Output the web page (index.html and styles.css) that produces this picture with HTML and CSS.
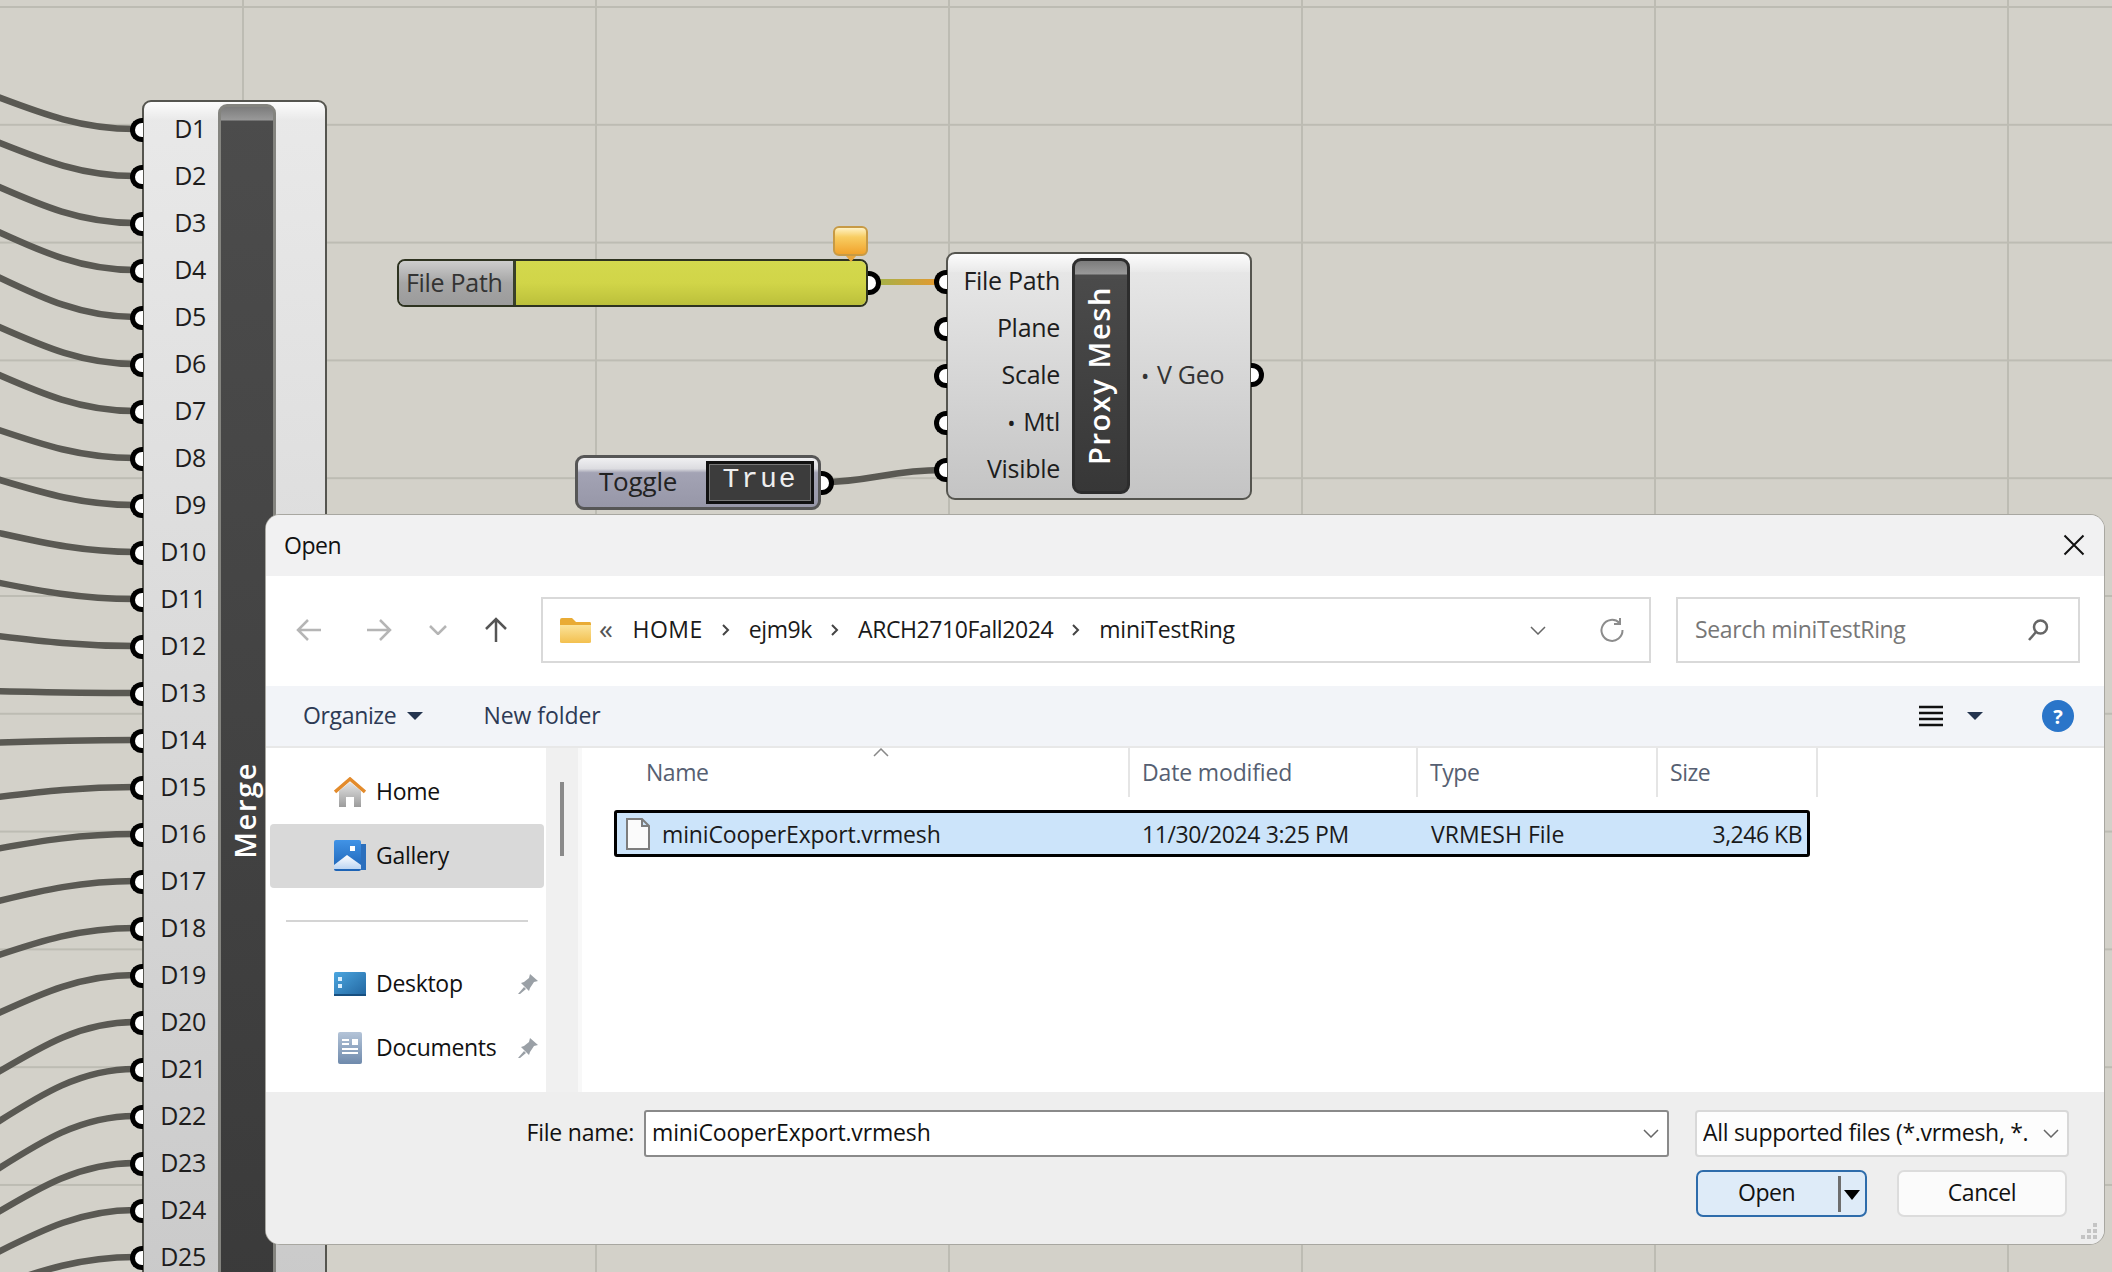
FILE: index.html
```html
<!DOCTYPE html>
<html lang="en">
<head>
<meta charset="utf-8">
<title>Open</title>
<link rel="stylesheet" href="styles.css">
</head>
<body>
<main class="canvas">
  <svg class="wires" width="2112" height="1272" viewBox="0 0 2112 1272">
    <defs>
      <linearGradient id="wireA" x1="0" x2="1" y1="0" y2="0"><stop offset="0" stop-color="#a3b24a"/><stop offset="1" stop-color="#e8982e"/></linearGradient>
    </defs>
    <g class="wire-set">
      <path d="M-10,94 C40,113 80,129 135,129"/>
      <path d="M-10,139 C40,159 80,176 135,176"/>
      <path d="M-10,183 C40,205 80,223 135,223"/>
      <path d="M-10,228 C40,251 80,270 135,270"/>
      <path d="M-10,273 C40,297 80,317 135,317"/>
      <path d="M-10,323 C40,345 80,364 135,364"/>
      <path d="M-10,371 C40,393 80,411 135,411"/>
      <path d="M-10,427 C40,444 80,458 135,458"/>
      <path d="M-10,477 C40,492 80,505 135,505"/>
      <path d="M-10,531 C40,542 80,552 135,552"/>
      <path d="M-10,581 C40,591 80,599 135,599"/>
      <path d="M-10,635 C40,641 80,646 135,646"/>
      <path d="M-10,691 C40,692 80,693 135,693"/>
      <path d="M-10,743 C40,741 80,740 135,740"/>
      <path d="M-10,798 C40,792 80,787 135,787"/>
      <path d="M-10,850 C40,841 80,834 135,834"/>
      <path d="M-10,903 C40,891 80,881 135,881"/>
      <path d="M-10,958 C40,941 80,928 135,928"/>
      <path d="M-10,1017 C40,994 80,975 135,975"/>
      <path d="M-10,1077 C40,1047 80,1022 135,1022"/>
      <path d="M-10,1127 C40,1095 80,1069 135,1069"/>
      <path d="M-10,1174 C40,1142 80,1116 135,1116"/>
      <path d="M-10,1217 C40,1187 80,1163 135,1163"/>
      <path d="M-10,1256 C40,1231 80,1210 135,1210"/>
      <path d="M-10,1288 C40,1271 80,1257 135,1257"/>
      <path d="M822,482 C870,482 890,470 942,470"/>
    </g>
    <rect class="wire-color" x="876" y="279" width="66" height="6" fill="url(#wireA)"/>
  </svg>

  <section class="node node-merge">
    <div class="node-inputs">
      <div class="row"><span class="port port-in"></span>D1</div>
      <div class="row"><span class="port port-in"></span>D2</div>
      <div class="row"><span class="port port-in"></span>D3</div>
      <div class="row"><span class="port port-in"></span>D4</div>
      <div class="row"><span class="port port-in"></span>D5</div>
      <div class="row"><span class="port port-in"></span>D6</div>
      <div class="row"><span class="port port-in"></span>D7</div>
      <div class="row"><span class="port port-in"></span>D8</div>
      <div class="row"><span class="port port-in"></span>D9</div>
      <div class="row"><span class="port port-in"></span>D10</div>
      <div class="row"><span class="port port-in"></span>D11</div>
      <div class="row"><span class="port port-in"></span>D12</div>
      <div class="row"><span class="port port-in"></span>D13</div>
      <div class="row"><span class="port port-in"></span>D14</div>
      <div class="row"><span class="port port-in"></span>D15</div>
      <div class="row"><span class="port port-in"></span>D16</div>
      <div class="row"><span class="port port-in"></span>D17</div>
      <div class="row"><span class="port port-in"></span>D18</div>
      <div class="row"><span class="port port-in"></span>D19</div>
      <div class="row"><span class="port port-in"></span>D20</div>
      <div class="row"><span class="port port-in"></span>D21</div>
      <div class="row"><span class="port port-in"></span>D22</div>
      <div class="row"><span class="port port-in"></span>D23</div>
      <div class="row"><span class="port port-in"></span>D24</div>
      <div class="row"><span class="port port-in"></span>D25</div>
    </div>
    <div class="strip"><span class="strip-label">Merge</span></div>
  </section>

  <section class="param">
    <div class="param-label">File Path</div>
    <div class="param-value"></div>
    <span class="port port-out"></span>
  </section>
  <div class="bubble"></div>

  <section class="node node-proxy">
    <div class="node-inputs">
      <div class="row"><span class="port port-in"></span>File Path</div>
      <div class="row"><span class="port port-in"></span>Plane</div>
      <div class="row"><span class="port port-in"></span>Scale</div>
      <div class="row"><span class="port port-in"></span><span class="dot">•</span>Mtl</div>
      <div class="row"><span class="port port-in"></span>Visible</div>
    </div>
    <div class="strip"><span class="strip-label">Proxy Mesh</span></div>
    <div class="node-output">
      <div class="row row-out"><span class="dot">•</span>V Geo<span class="port port-out"></span></div>
    </div>
  </section>

  <section class="toggle">
    <div class="toggle-label">Toggle</div>
    <div class="toggle-btn">True</div>
    <span class="port port-out"></span>
  </section>

  <section class="dialog">
    <header class="titlebar">
      <span>Open</span>
      <svg class="close" width="22" height="22" viewBox="0 0 22 22"><path d="M1.5 1.5 L20.5 20.5 M20.5 1.5 L1.5 20.5"/></svg>
    </header>

    <div class="toolbar">
      <div class="nav-btns">
        <svg class="i-back" width="26" height="24" viewBox="0 0 26 24"><path d="M25 12 H2 M12 2 L2 12 L12 22"/></svg>
        <svg class="i-back" width="26" height="24" viewBox="0 0 26 24"><path d="M1 12 H24 M14 2 L24 12 L14 22"/></svg>
        <svg class="i-back i-small" width="18" height="10" viewBox="0 0 18 10"><path d="M1 1 L9 9 L17 1"/></svg>
        <svg class="i-up" width="24" height="26" viewBox="0 0 24 26"><path d="M12 25 V2 M2 12 L12 2 L22 12"/></svg>
      </div>
      <div class="address">
        <svg width="33" height="27" viewBox="0 0 33 27">
          <defs><linearGradient id="fold" x1="0" x2="0" y1="0" y2="1"><stop offset="0" stop-color="#fbe39a"/><stop offset="1" stop-color="#f3c04f"/></linearGradient></defs>
          <path d="M1 3 Q1 1 3 1 H13 L17 5 H31 Q32 5 32 7 V10 H1 Z" fill="#e9ab35"/>
          <path d="M1 8 H32 V25 Q32 26 30 26 H3 Q1 26 1 25 Z" fill="url(#fold)"/>
        </svg>
        <span class="crumb-mark">«</span>
        <span class="crumb crumb-home">HOME</span>
        <svg class="sep" width="10" height="14" viewBox="0 0 10 14"><path d="M2 2 L7 7 L2 12"/></svg>
        <span class="crumb">ejm9k</span>
        <svg class="sep" width="10" height="14" viewBox="0 0 10 14"><path d="M2 2 L7 7 L2 12"/></svg>
        <span class="crumb">ARCH2710Fall2024</span>
        <svg class="sep" width="10" height="14" viewBox="0 0 10 14"><path d="M2 2 L7 7 L2 12"/></svg>
        <span class="crumb crumb-last">miniTestRing</span>
        <svg class="addr-chev" width="16" height="9" viewBox="0 0 16 9"><path d="M1 1 L8 8 L15 1"/></svg>
        <svg class="addr-refresh" width="26" height="26" viewBox="0 0 26 26"><path d="M20.5 6 A10.5 10.5 0 1 0 23.5 13 M21 1 V7 H15"/></svg>
      </div>
      <div class="search">
        <span class="lift">Search miniTestRing</span>
        <svg width="24" height="24" viewBox="0 0 24 24"><circle cx="14.5" cy="9" r="6.5"/><path d="M10 14 L3 22"/></svg>
      </div>
    </div>

    <div class="commands">
      <span class="cmd lift">Organize</span>
      <span class="caret"></span>
      <span class="cmd cmd-new lift">New folder</span>
      <svg class="views" width="26" height="22" viewBox="0 0 26 22"><path d="M1 2 H25 M1 8 H25 M1 14 H25 M1 20 H25"/></svg>
      <span class="caret caret-views"></span>
      <span class="help">?</span>
    </div>

    <div class="main-area">
      <nav class="sidebar">
        <div class="side-row">
          <svg width="32" height="30" viewBox="0 0 32 30">
            <defs><linearGradient id="hb" x1="0" x2="0" y1="0" y2="1"><stop offset="0" stop-color="#e4e4e4"/><stop offset="1" stop-color="#9c9c9c"/></linearGradient></defs>
            <path d="M5 14 L16 5 L27 14 V30 H20 V20 H12 V30 H5 Z" fill="url(#hb)"/>
            <path d="M1 15 L16 2 L31 15" fill="none" stroke="#e38b2c" stroke-width="3.5"/>
          </svg>
          <span class="lift">Home</span>
        </div>
        <div class="side-row side-active">
          <svg width="32" height="32" viewBox="0 0 32 32">
            <defs><linearGradient id="gb" x1="0" x2="0" y1="0" y2="1"><stop offset="0" stop-color="#4193e6"/><stop offset="1" stop-color="#1c62b4"/></linearGradient><linearGradient id="gm" x1="0" x2="0" y1="0" y2="1"><stop offset="0" stop-color="#ffffff"/><stop offset="1" stop-color="#bcd5f2"/></linearGradient></defs>
            <rect x="27" y="4" width="5" height="26" fill="#2b6fbd"/>
            <rect x="0" y="0" width="27" height="31" rx="2" fill="url(#gb)"/>
            <rect x="16" y="6" width="5" height="5" fill="#fff"/>
            <path d="M0 25 L13 15 L27 25 V29 H0 Z" fill="url(#gm)"/>
          </svg>
          <span class="lift">Gallery</span>
        </div>
        <div class="side-sep"></div>
        <div class="side-row">
          <svg width="32" height="24" viewBox="0 0 32 24">
            <defs><linearGradient id="db" x1="0" x2="1" y1="0" y2="1"><stop offset="0" stop-color="#4ba6e0"/><stop offset="1" stop-color="#22659f"/></linearGradient></defs>
            <rect width="32" height="24" rx="1.5" fill="url(#db)"/>
            <rect y="22" width="32" height="2" fill="#174f80"/>
            <rect x="4" y="5" width="4" height="4" fill="#d9efff"/><rect x="4" y="12" width="4" height="4" fill="#d9efff"/>
          </svg>
          <span class="lift">Desktop</span>
          <svg class="pin" width="22" height="22" viewBox="0 0 22 22"><path d="M13 1 L21 8 L17 9 L13 15 L12 18 L4 10 L7 9 L12 5 Z M7 14 L1 21 L3 21 L9 16 Z"/></svg>
        </div>
        <div class="side-row">
          <svg class="doc" width="24" height="32" viewBox="0 0 24 32">
            <defs><linearGradient id="dc" x1="0" x2="0" y1="0" y2="1"><stop offset="0" stop-color="#b4c4d8"/><stop offset="1" stop-color="#6f8aac"/></linearGradient></defs>
            <rect width="24" height="32" rx="2" fill="url(#dc)"/>
            <path d="M4 8 H11 M4 12 H11 M4 17 H20 M4 21 H20" stroke="#fff" stroke-width="2"/>
            <rect x="14" y="7" width="6" height="6" fill="#fff"/>
          </svg>
          <span class="lift">Documents</span>
          <svg class="pin" width="22" height="22" viewBox="0 0 22 22"><path d="M13 1 L21 8 L17 9 L13 15 L12 18 L4 10 L7 9 L12 5 Z M7 14 L1 21 L3 21 L9 16 Z"/></svg>
        </div>
      </nav>
      <div class="side-scroll"><div class="side-thumb"></div></div>
      <div class="files">
        <svg class="sort" width="16" height="9" viewBox="0 0 16 9"><path d="M1 8 L8 1 L15 8"/></svg>
        <div class="file-head">
          <div class="col col-name">Name</div>
          <div class="col col-date">Date modified</div>
          <div class="col col-type">Type</div>
          <div class="col col-size">Size</div>
        </div>
        <div class="file-row">
          <div class="cell cell-name">
            <svg width="24" height="32" viewBox="0 0 24 32"><path d="M1 1 H16 L23 8 V31 H1 Z M16 1 V8 H23" fill="#fbfbfb" stroke="#7d7d7d" stroke-width="2"/></svg>
            <span>miniCooperExport.vrmesh</span>
          </div>
          <div class="cell cell-date">11/30/2024 3:25 PM</div>
          <div class="cell cell-type">VRMESH File</div>
          <div class="cell cell-size">3,246 KB</div>
        </div>
      </div>
    </div>

    <footer class="bottom">
      <div class="bottom-line">
        <span class="fn-label lift">File name:</span>
        <div class="fn-input">
          <span class="lift">miniCooperExport.vrmesh</span>
          <svg width="16" height="9" viewBox="0 0 16 9"><path d="M1 1 L8 8 L15 1"/></svg>
        </div>
        <div class="filter">
          <span class="filter-text lift">All supported files (*.vrmesh, *.</span>
          <svg width="16" height="9" viewBox="0 0 16 9"><path d="M1 1 L8 8 L15 1"/></svg>
        </div>
      </div>
      <div class="bottom-line bottom-actions">
        <div class="btn btn-open"><span class="btn-open-text lift">Open</span><span class="btn-split"></span><span class="btn-caret"></span></div>
        <div class="btn"><span class="lift">Cancel</span></div>
      </div>
      <svg class="grip" width="18" height="18" viewBox="0 0 18 18"><path d="M13 1 h4 v4 h-4z M7 7 h4 v4 h-4z M13 7 h4 v4 h-4z M1 13 h4 v4 h-4z M7 13 h4 v4 h-4z M13 13 h4 v4 h-4z"/></svg>
    </footer>
  </section>
</main>
</body>
</html>
```
FILE: styles.css
```css
* { box-sizing: border-box; }
html, body { margin: 0; padding: 0; }
body { font-family: "Open Sans", "Noto Sans", sans-serif; }

.canvas {
  position: relative;
  width: 2112px;
  height: 1272px;
  overflow: hidden;
  background-color: #d3d1c9;
  background-image:
    linear-gradient(#bdbcb3 2px, transparent 2px),
    linear-gradient(90deg, #bdbcb3 2px, transparent 2px);
  background-size: 353px 117.8px;
  background-position: 242px 6px;
}

.wires { position: absolute; left: 0; top: 0; }
.wire-set path { fill: none; stroke: #5a5953; stroke-width: 6.5; }

/* Grasshopper nodes */
.node {
  position: absolute;
  display: flex;
  border: 2px solid #55554f;
  border-radius: 9px;
  background:
    linear-gradient(#fcfcfc, #e9e9e9) 0 0 / 100% 18px no-repeat,
    linear-gradient(#e9e9e9, #c4c4c4);
  color: #1d1d1d;
  font-family: "Open Sans", sans-serif;
  font-size: 25px;
  letter-spacing: -0.3px;
}
.node-merge { left: 142px; top: 100px; width: 185px; height: 1420px; }
.node-proxy { left: 946px; top: 252px; width: 306px; height: 248px; }
.node-inputs { padding-top: 4px; text-align: right; white-space: nowrap; }
.node-merge .node-inputs { width: 74px; padding-right: 12px; }
.node-proxy .node-inputs { width: 124px; padding-right: 12px; }
.row { position: relative; height: 47px; line-height: 45px; }
.dot { margin-right: 8px; font-size: 22px; }
.strip {
  display: flex;
  flex: none;
  align-items: center;
  justify-content: center;
  width: 58px;
  margin-top: 2px;
  margin-bottom: 2px;
  padding-right: 5px;
  border: 3px solid #84847f;
  border-radius: 9px;
  background:
    linear-gradient(#7c7c7c, #999 13px, #4c4c4c 14px) 0 0 / 100% 18px no-repeat,
    linear-gradient(#4c4c4c, #373737);
}
.node-proxy .strip { border-color: #2d2d2d; margin-top: 4px; margin-bottom: 4px; }
.strip-label {
  writing-mode: vertical-rl;
  transform: rotate(180deg);
  color: #fff;
  font-size: 29px;
  font-weight: 600;
  letter-spacing: 1.6px;
  white-space: nowrap;
}
.node-output { flex: 1; padding-top: 98px; padding-left: 11px; }
.row-out { position: static; color: #333; white-space: nowrap; }

.port {
  position: absolute;
  top: 12px;
  width: 13px;
  height: 24px;
  background: #fff;
  border: 5px solid #000;
}
.port-in {
  left: -14px;
  border-right: 0;
  border-radius: 12px 0 0 12px;
}
.port-out {
  right: -14px;
  border-left: 0;
  border-radius: 0 12px 12px 0;
}
.row-out .port-out { top: 109px; right: -14px; }

.param {
  position: absolute;
  left: 397px;
  top: 259px;
  width: 471px;
  height: 48px;
  display: flex;
  border: 2px solid #2e3320;
  border-radius: 8px;
  background: #ccc;
}
.param-label {
  width: 117px;
  padding-left: 7px;
  border-right: 3px solid #39402a;
  border-radius: 6px 0 0 6px;
  background: linear-gradient(#cdcdcd, #a5a5a5 50%, #9b9b9b);
  color: #333;
  font-size: 25px;
  line-height: 42px;
  letter-spacing: -0.3px;
  white-space: nowrap;
}
.param-value {
  flex: 1;
  border-radius: 0 6px 6px 0;
  background: linear-gradient(#d3d84d, #d1d548 50%, #bcc03b);
}
.param .port-out { top: 10px; right: -15px; }

.bubble {
  position: absolute;
  left: 833px;
  top: 226px;
  width: 35px;
  height: 30px;
  border: 2px solid #c79a45;
  border-radius: 6px;
  background: linear-gradient(#fff2c4, #f8cd62 35%, #f1a32c);
}
.bubble::after {
  content: "";
  position: absolute;
  left: 11px;
  bottom: -8px;
  border-left: 5px solid transparent;
  border-right: 5px solid transparent;
  border-top: 6px solid #e8a63c;
}

.toggle {
  position: absolute;
  left: 575px;
  top: 455px;
  width: 246px;
  height: 55px;
  display: flex;
  align-items: center;
  justify-content: space-between;
  padding: 0 4px 0 21px;
  border: 3px solid #565656;
  border-radius: 9px;
  background: linear-gradient(#f0f0f2, #dcdce0 22%, #a3a3b4 30%, #9797a8);
}
.toggle-label { font-size: 26px; letter-spacing: -0.2px; color: #222; padding-bottom: 3px; }
.toggle-btn {
  width: 108px;
  height: 43px;
  border: 3px solid #111;
  outline: 1px solid #777;
  outline-offset: -4px;
  background: #3c3c3c;
  color: #eee;
  font-family: "Liberation Mono", monospace;
  font-size: 28px;
  letter-spacing: 2px;
  line-height: 32px;
  text-align: center;
}
.toggle .port-out { top: 13px; right: -16px; }

/* Open dialog */
.dialog {
  position: absolute;
  left: 266px;
  top: 515px;
  width: 1838px;
  height: 729px;
  display: flex;
  flex-direction: column;
  overflow: hidden;
  border-radius: 14px;
  box-shadow: 0 0 0 1px #a8a7a1;
  background: #eee;
  color: #111;
  font-family: "Open Sans", sans-serif;
  font-size: 23px;
  letter-spacing: -0.45px;
}
.lift { padding-bottom: 3px; }
.titlebar {
  display: flex;
  flex: none;
  align-items: center;
  justify-content: space-between;
  height: 61px;
  padding: 0 19px 2px 18px;
  background: #f1f1f2;
}
.close path { fill: none; stroke: #111; stroke-width: 2; }

.toolbar {
  display: flex;
  flex: none;
  align-items: flex-start;
  height: 110px;
  padding-top: 21px;
  background: #fff;
}
.nav-btns {
  display: flex;
  align-items: center;
  width: 275px;
  height: 66px;
  padding-left: 30px;
}
.nav-btns svg { flex: none; fill: none; }
.i-back { stroke: #b5b5b5; stroke-width: 2.5; margin-right: 44px; }
.i-small { margin-left: -7px; margin-right: 37px; }
.i-up { stroke: #555; stroke-width: 2.5; }
.address {
  display: flex;
  align-items: center;
  width: 1110px;
  height: 66px;
  margin-right: 25px;
  padding-left: 16px;
  border: 2px solid #d9d9d9;
  white-space: nowrap;
}
.crumb-mark { margin-left: 7px; margin-right: 20px; padding-bottom: 4px; color: #555; font-size: 28px; }
.crumb { padding-bottom: 3px; color: #1a1a1a; letter-spacing: -0.4px; }
.crumb-home { letter-spacing: 0.5px; }
.crumb-last { letter-spacing: -0.23px; }
.sep { margin: 0 18px; fill: none; stroke: #444; stroke-width: 2; }
.addr-chev { margin-left: auto; margin-right: 53px; fill: none; stroke: #666; stroke-width: 1.5; }
.addr-refresh { margin-right: 24px; fill: none; stroke: #8c8c8c; stroke-width: 2; }
.search {
  display: flex;
  align-items: center;
  justify-content: space-between;
  width: 404px;
  height: 66px;
  padding: 0 28px 0 17px;
  border: 2px solid #d9d9d9;
  color: #777;
  letter-spacing: -0.35px;
}
.search svg { fill: none; stroke: #666; stroke-width: 2.5; }

.commands {
  position: relative;
  display: flex;
  flex: none;
  align-items: center;
  height: 60px;
  padding: 0 30px 0 37px;
  background: #f2f4f8;
  color: #2d3a55;
  letter-spacing: -0.35px;
}
.caret {
  width: 0;
  height: 0;
  margin-left: 11px;
  border-left: 8px solid transparent;
  border-right: 8px solid transparent;
  border-top: 8px solid #24344f;
}
.cmd-new { margin-left: 60px; letter-spacing: -0.05px; }
.views { margin-left: auto; fill: none; stroke: #111; stroke-width: 2.5; }
.caret-views { margin-left: 23px; }
.help {
  display: flex;
  align-items: center;
  justify-content: center;
  width: 32px;
  height: 32px;
  margin-left: 59px;
  border-radius: 50%;
  background: #2a75c9;
  color: #fff;
  font-size: 20px;
  font-weight: 700;
  letter-spacing: 0;
}

.main-area {
  display: flex;
  flex: none;
  height: 346px;
  border-top: 2px solid #e8e8e8;
}
.sidebar {
  flex: none;
  width: 280px;
  padding-top: 12px;
  overflow: hidden;
  background: #fff;
  letter-spacing: -0.3px;
}
.side-row {
  display: flex;
  align-items: center;
  height: 64px;
  margin: 0 2px 0 4px;
  padding: 0 5px 0 64px;
  border-radius: 4px;
}
.side-row > span { margin-left: 10px; }
.side-active { background: #d9d9d9; }
.side-row svg { flex: none; }
.doc { margin-left: 4px; margin-right: 4px; }
.pin { margin-left: auto; fill: #9aa0a6; }
.side-sep { position: relative; height: 64px; }
.side-sep::after {
  content: "";
  position: absolute;
  left: 20px;
  right: 18px;
  top: 32px;
  height: 2px;
  background: #d4d4d4;
}
.side-scroll {
  flex: none;
  width: 32px;
  padding: 34px 0 0 14px;
  background: #f0f0f0;
}
.side-thumb { width: 4px; height: 74px; background: #8a8a8a; }
.files {
  position: relative;
  flex: 1;
  border-left: 4px solid #f8f8f8;
  background: #fff;
}
.sort {
  position: absolute;
  left: 291px;
  top: 0;
  fill: none;
  stroke: #888;
  stroke-width: 1.5;
}
.file-head {
  display: flex;
  height: 49px;
  color: #565f72;
  line-height: 48px;
}
.col { border-right: 2px solid #e5e5e5; }
.col-name { width: 548px; padding-left: 64px; }
.col-date { width: 288px; padding-left: 12px; letter-spacing: -0.15px; }
.col-type { width: 240px; padding-left: 12px; }
.col-size { width: 160px; padding-left: 12px; }
.file-row {
  display: flex;
  align-items: center;
  width: 1196px;
  height: 47px;
  margin-top: 13px;
  margin-left: 32px;
  border: 3px solid #000;
  border-radius: 3px;
  background: #cce4fa;
  color: #1a1a1a;
}
.cell-name { display: flex; align-items: center; width: 513px; padding-left: 9px; letter-spacing: -0.15px; }
.cell-name span { margin-left: 12px; }
.cell-date { width: 288px; padding-left: 12px; letter-spacing: -0.4px; }
.cell-type { width: 240px; padding-left: 13px; letter-spacing: 0; }
.cell-size { flex: 1; padding-right: 5px; text-align: right; letter-spacing: -0.5px; }

.bottom {
  position: relative;
  flex: 1;
  padding-top: 18px;
  background: #eee;
}
.bottom-line { display: flex; align-items: center; }
.fn-label { width: 378px; padding-right: 10px; text-align: right; letter-spacing: -0.2px; }
.fn-input, .filter {
  display: flex;
  align-items: center;
  justify-content: space-between;
  height: 47px;
  padding: 0 8px 0 6px;
  background: #fff;
  white-space: nowrap;
}
.fn-input { width: 1025px; margin-right: 26px; border: 2px solid #8a8a8a; border-radius: 3px; letter-spacing: -0.15px; }
.filter { width: 374px; overflow: hidden; border: 2px solid #d8d8d8; border-radius: 4px; background: #fdfdfd; letter-spacing: -0.3px; }
.filter-text { flex: 1; overflow: hidden; }
.fn-input svg, .filter svg { flex: none; fill: none; stroke: #666; stroke-width: 1.5; }
.bottom-actions { justify-content: flex-end; gap: 30px; margin-top: 13px; padding-right: 37px; }
.btn {
  display: flex;
  align-items: center;
  justify-content: center;
  width: 170px;
  height: 47px;
  border: 2px solid #dcdcdc;
  border-radius: 7px;
  background: #fbfbfb;
}
.btn-open {
  position: relative;
  justify-content: flex-start;
  width: 171px;
  border-color: #2e6cab;
  background: #deebf8;
}
.btn-open-text { margin-left: 40px; }
.btn-split { position: absolute; left: 140px; top: 4px; width: 3px; height: 36px; background: #6e6e6e; }
.btn-caret {
  position: absolute;
  left: 146px;
  top: 18px;
  border-left: 8px solid transparent;
  border-right: 8px solid transparent;
  border-top: 10px solid #000;
}
.grip { position: absolute; right: 6px; bottom: 4px; fill: #c4c4c4; }
```
